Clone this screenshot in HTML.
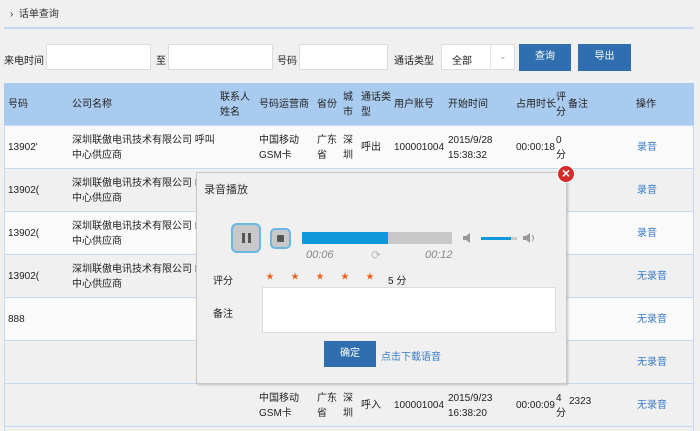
<!DOCTYPE html>
<html><head><meta charset="utf-8"><style>
*{margin:0;padding:0;box-sizing:border-box}
body{width:700px;height:431px;background:#f0f0f0;font-family:"Liberation Sans","Noto Sans CJK SC",sans-serif;font-size:10px;color:#222;position:relative;overflow:hidden}
.a{position:absolute}
.inp{position:absolute;background:#fff;border:1px solid #dcdcdc;height:26px;top:44px}
.btn{position:absolute;background:#2f6fb0;color:#fff;text-align:center;line-height:26px;height:27px;top:44px;font-size:10px}
.row{position:absolute;left:4px;width:690px;height:43px;border-bottom:1px solid #c5daf0}
.c{position:absolute;line-height:15px;white-space:nowrap}
.lk{color:#3a7bc8}
</style></head><body>
<div class="a" style="left:10px;top:5px;font-size:10px;color:#333">›&nbsp; 话单查询</div>
<div class="a" style="left:4px;top:27px;width:690px;height:2px;background:#c5daf0"></div>
<div class="a" style="left:4px;top:52px">来电时间</div>
<div class="inp" style="left:46px;width:105px"></div>
<div class="a" style="left:156px;top:52px">至</div>
<div class="inp" style="left:168px;width:105px"></div>
<div class="a" style="left:277px;top:52px">号码</div>
<div class="inp" style="left:299px;width:89px"></div>
<div class="a" style="left:394px;top:52px">通话类型</div>
<div class="inp" style="left:441px;width:74px"><span class="a" style="left:10px;top:7px">全部</span><span class="a" style="left:48px;top:0;width:1px;height:24px;background:#e4e4e4"></span><span class="a" style="left:57px;top:6px;color:#999;font-size:9px">⌄</span></div>
<div class="btn" style="left:519px;width:52px">查询</div>
<div class="btn" style="left:578px;width:53px">导出</div>

<div class="a" style="left:4px;top:83px;width:690px;height:43px;background:#a9cbef;border-bottom:1px solid #c5daf0"></div>
<div class="c" style="left:8px;top:97px">号码</div>
<div class="c" style="left:72px;top:97px">公司名称</div>
<div class="c" style="left:220px;top:90px">联系人<br>姓名</div>
<div class="c" style="left:259px;top:97px">号码运营商</div>
<div class="c" style="left:317px;top:97px">省份</div>
<div class="c" style="left:343px;top:90px">城<br>市</div>
<div class="c" style="left:361px;top:90px">通话类<br>型</div>
<div class="c" style="left:394px;top:97px">用户账号</div>
<div class="c" style="left:448px;top:97px">开始时间</div>
<div class="c" style="left:516px;top:97px">占用时长</div>
<div class="c" style="left:556px;top:90px">评<br>分</div>
<div class="c" style="left:568px;top:97px">备注</div>
<div class="c" style="left:636px;top:97px">操作</div>

<div class="row" style="top:126px;background:#fafafa"></div>
<div class="row" style="top:169px;background:#f0f0f0"></div>
<div class="row" style="top:212px;background:#fafafa"></div>
<div class="row" style="top:255px;background:#f0f0f0"></div>
<div class="row" style="top:298px;background:#fafafa"></div>
<div class="row" style="top:341px;background:#f0f0f0"></div>
<div class="row" style="top:384px;background:#f0f0f0"></div>
<div class="a" style="left:4px;top:126px;width:1px;height:305px;background:#c5daf0"></div>
<div class="a" style="left:693px;top:126px;width:1px;height:305px;background:#c5daf0"></div>

<div class="c" style="left:8px;top:140px">13902'</div>
<div class="c" style="left:72px;top:133px">深圳联傲电讯技术有限公司 呼叫<br>中心供应商</div>
<div class="c" style="left:259px;top:133px">中国移动<br>GSM卡</div>
<div class="c" style="left:317px;top:133px">广东<br>省</div>
<div class="c" style="left:343px;top:133px">深<br>圳</div>
<div class="c" style="left:361px;top:140px">呼出</div>
<div class="c" style="left:394px;top:140px">100001004</div>
<div class="c" style="left:448px;top:133px">2015/9/28<br>15:38:32</div>
<div class="c" style="left:516px;top:140px">00:00:18</div>
<div class="c" style="left:556px;top:133px">0<br>分</div>
<div class="c lk" style="left:637px;top:140px">录音</div>

<div class="c" style="left:8px;top:183px">13902(</div>
<div class="c" style="left:72px;top:176px">深圳联傲电讯技术有限公司 I<br>中心供应商</div>
<div class="c lk" style="left:637px;top:183px">录音</div>
<div class="c" style="left:8px;top:226px">13902(</div>
<div class="c" style="left:72px;top:219px">深圳联傲电讯技术有限公司 I<br>中心供应商</div>
<div class="c lk" style="left:637px;top:226px">录音</div>
<div class="c" style="left:8px;top:269px">13902(</div>
<div class="c" style="left:72px;top:262px">深圳联傲电讯技术有限公司 I<br>中心供应商</div>
<div class="c lk" style="left:637px;top:269px">无录音</div>
<div class="c" style="left:8px;top:312px">888</div>
<div class="c lk" style="left:637px;top:312px">无录音</div>
<div class="c lk" style="left:637px;top:355px">无录音</div>

<div class="c" style="left:259px;top:391px">中国移动<br>GSM卡</div>
<div class="c" style="left:317px;top:391px">广东<br>省</div>
<div class="c" style="left:343px;top:391px">深<br>圳</div>
<div class="c" style="left:361px;top:398px">呼入</div>
<div class="c" style="left:394px;top:398px">100001004</div>
<div class="c" style="left:448px;top:391px">2015/9/23<br>16:38:20</div>
<div class="c" style="left:516px;top:398px">00:00:09</div>
<div class="c" style="left:556px;top:391px">4<br>分</div>
<div class="c" style="left:569px;top:394px">2323</div>
<div class="c lk" style="left:637px;top:398px">无录音</div>

<!-- dialog -->
<div class="a" style="left:196px;top:172px;width:371px;height:212px;background:#f0f0f0;border:1px solid #c8c8c8;box-shadow:1px 1px 2px rgba(0,0,0,.2)"></div>
<div class="a" style="left:204px;top:181px;font-size:11px;color:#333">录音播放</div>
<div class="a" style="left:557px;top:165px;width:18px;height:18px;border-radius:50%;background:#d42a2a;border:1px solid #fff;color:#fff;font-size:14px;font-weight:bold;line-height:15px;text-align:center">×</div>
<div class="a" style="left:231px;top:223px;width:30px;height:30px;border:2px solid #6ab6e4;border-radius:6px;background:#c8c8c8"><span class="a" style="left:9px;top:8px;width:3px;height:10px;background:#555"></span><span class="a" style="left:15px;top:8px;width:3px;height:10px;background:#555"></span></div>
<div class="a" style="left:270px;top:228px;width:21px;height:21px;border:2px solid #6ab6e4;border-radius:5px;background:#c8c8c8"><span class="a" style="left:5px;top:5px;width:7px;height:7px;background:#555;border-radius:1px"></span></div>
<div class="a" style="left:302px;top:232px;width:150px;height:12px;background:#c8c8c8"><span class="a" style="left:0;top:0;width:86px;height:12px;background:#0f98dc"></span></div>
<div class="a" style="left:306px;top:249px;font-style:italic;color:#888;font-size:11px">00:06</div>
<div class="a" style="left:371px;top:248px;color:#bbb;font-size:12px">⟳</div>
<div class="a" style="left:425px;top:249px;font-style:italic;color:#888;font-size:11px">00:12</div>
<svg class="a" style="left:462px;top:232px" width="10" height="12"><path d="M1 4h3l4-3v10l-4-3H1z" fill="#999"/></svg>
<div class="a" style="left:481px;top:237px;width:36px;height:3px;background:#ccc"><span class="a" style="left:0;top:0;width:30px;height:3px;background:#0f98dc"></span></div>
<svg class="a" style="left:522px;top:232px" width="16" height="12"><path d="M1 4h3l4-3v10l-4-3H1z" fill="#999"/><path d="M10 3q3 3 0 6" stroke="#999" fill="none"/></svg>
<div class="a" style="left:213px;top:272px">评分</div>
<div class="a" style="left:266px;top:271px;color:#f0601f;font-size:8px;letter-spacing:17px">★★★★★</div>
<div class="a" style="left:388px;top:272px">5 分</div>
<div class="a" style="left:213px;top:305px">备注</div>
<div class="a" style="left:262px;top:287px;width:294px;height:46px;background:#fff;border:1px solid #ddd"></div>
<div class="a" style="left:324px;top:341px;width:52px;height:26px;background:#2f6fb0;color:#fff;text-align:center;line-height:26px">确定</div>
<div class="a lk" style="left:381px;top:348px">点击下载语音</div>
</body></html>
